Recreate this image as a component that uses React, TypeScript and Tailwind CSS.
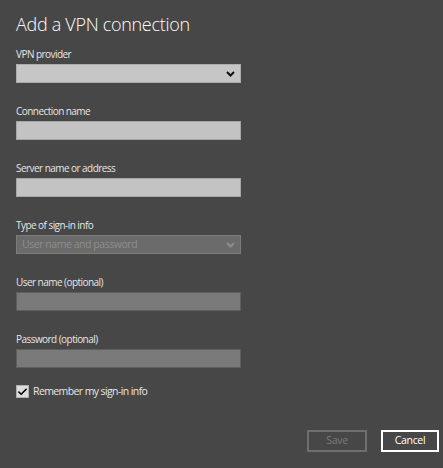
import { Check } from 'lucide-react'

const fields = [
  { id: 'name', label: 'Connection name', kind: 'light' },
  { id: 'server', label: 'Server name or address', kind: 'light' },
  { id: 'type', label: 'Type of sign-in info', kind: 'disabled' },
  { id: 'user', label: 'User name (optional)', kind: 'dark' },
  { id: 'pass', label: 'Password (optional)', kind: 'dark' },
]

const Chevron = ({ color }: { color: string }) => (
  <svg width="9" height="6" viewBox="0 0 9 6" fill="none">
    <polyline points="1,1 4.5,4.5 8,1" stroke={color} strokeWidth="2" />
  </svg>
)

const Label = ({ children }: { children: string }) => (
  <p className="text-[10px] leading-[16px] tracking-[-0.55px] text-[#e6e6e6]">{children}</p>
)

const Field = ({ label, kind }: { label: string; kind: string }) => {
  return (
    <div className="mt-[20px]">
      <Label>{label}</Label>
      {kind === 'light' && (
        <div className="mt-[2px] w-[225px] h-[19px] bg-[#c3c3c3] border border-[#a6a6a6]" />
      )}
      {kind === 'dark' && (
        <div className="mt-[2px] w-[225px] h-[19px] bg-[#7a7a7a] border border-[#5e5e5e]" />
      )}
      {kind === 'disabled' && (
        <div className="mt-[2px] w-[225px] h-[19px] bg-[#6b6b6b] border border-[#7c7c7c] flex items-center justify-between pl-[5px] pr-[5px]">
          <span className="text-[10.5px] tracking-[-0.45px] text-[#8d8d8d]">User name and password</span>
          <Chevron color="#8d8d8d" />
        </div>
      )}
    </div>
  )
}

const App = () => {
  return (
    <div
      className="w-[443px] h-[468px] bg-[#474747] pl-4 pr-[4px] pt-[10px]"
      style={{ fontFamily: '"Open Sans", "Noto Sans", sans-serif' }}
    >
      <h1 className="text-[18px] leading-[28px] font-light tracking-[-0.3px] text-white">
        Add a VPN connection
      </h1>

      {/* VPN PROVIDER */}
      <div className="mt-[8px]">
        <Label>VPN provider</Label>
        <div className="mt-[2px] w-[225px] h-[19px] bg-[#c6c6c6] border border-[#adadad] flex items-center justify-end pr-[5px]">
          <Chevron color="#111" />
        </div>
      </div>

      {fields.map((f) => (
        <Field key={f.id} label={f.label} kind={f.kind} />
      ))}

      {/* REMEMBER */}
      <label className="mt-[16px] flex items-center text-[10.5px] tracking-[-0.6px] text-[#e6e6e6]">
        <span className="w-[13px] h-[13px] bg-[#dcdcdc] border border-[#b0b0b0] flex items-center justify-center mr-[4px]">
          <Check className="w-[12px] h-[12px] text-black" strokeWidth={3.5} />
        </span>
        Remember my sign-in info
      </label>

      {/* BUTTONS */}
      <div className="mt-[30px] flex justify-end gap-[14px]">
        <button className="w-[60px] h-[22px] border-2 border-[#6f6f6f] text-[10.5px] tracking-[-0.3px] text-[#7a7a7a]">
          Save
        </button>
        <button className="w-[58px] h-[22px] border-2 border-white text-[10.5px] tracking-[-0.3px] text-white">
          Cancel
        </button>
      </div>
    </div>
  )
}

export default App
